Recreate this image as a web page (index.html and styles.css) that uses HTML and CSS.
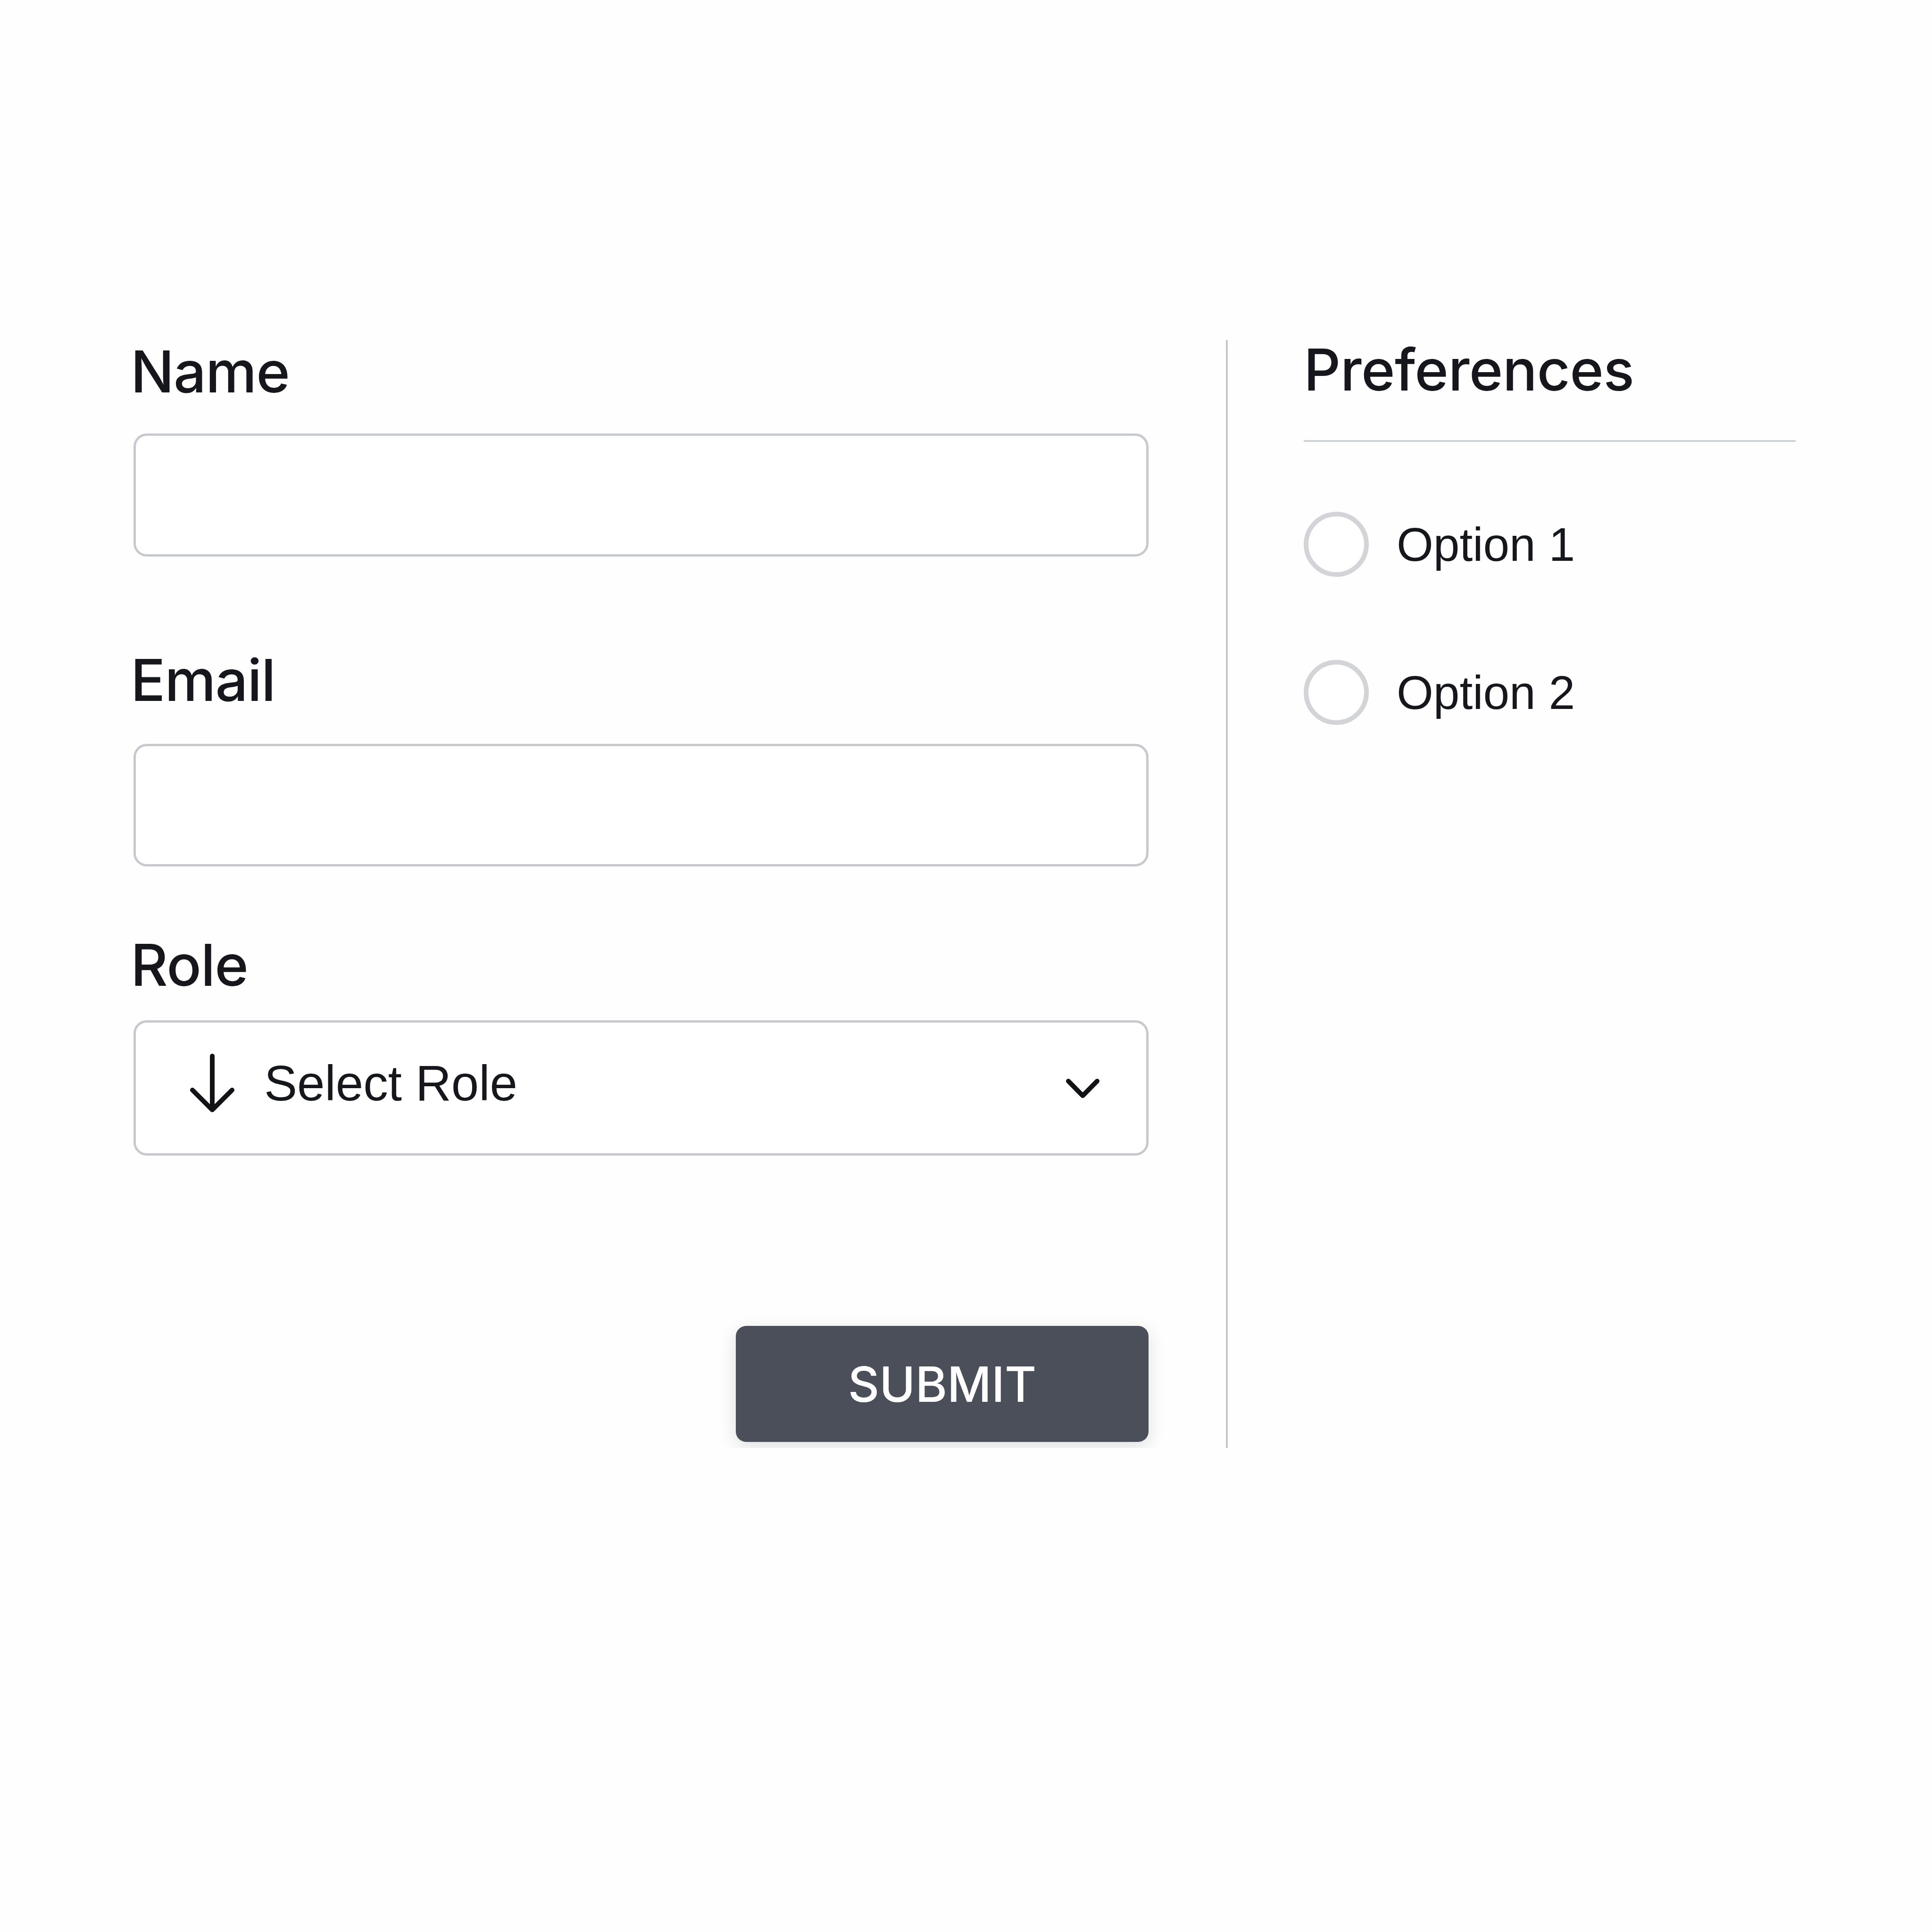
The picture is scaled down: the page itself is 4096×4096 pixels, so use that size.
FILE: index.html
```html
<!DOCTYPE html>
<html lang="en">
<head>
<meta charset="utf-8">
<title>Form</title>
<link rel="stylesheet" href="styles.css">
</head>
<body>
<div class="page">
  <form class="form">
    <div class="left">
      <label class="label">Name</label>
      <div class="input input-name"></div>
      <label class="label label-email">Email</label>
      <div class="input input-email"></div>
      <label class="label label-role">Role</label>
      <div class="select">
        <svg class="arrow" viewBox="0 0 100 126" aria-hidden="true">
          <path d="M50 5 V119 M8 77 L50 119 L92 77" fill="none" stroke="#121316" stroke-width="10" stroke-linecap="round" stroke-linejoin="round"/>
        </svg>
        <span class="select-text">Select Role</span>
        <svg class="chevron" viewBox="0 0 73 45" aria-hidden="true">
          <path d="M6 7 L36.5 38 L67 7" fill="none" stroke="#121316" stroke-width="10" stroke-linecap="round" stroke-linejoin="round"/>
        </svg>
      </div>
      <div class="actions">
        <button type="button" class="submit">SUBMIT</button>
      </div>
    </div>
    <div class="divider"></div>
    <div class="right">
      <h2 class="pref-title">Preferences</h2>
      <hr class="pref-rule">
      <div class="options">
        <label class="option"><span class="radio"></span><span class="option-text">Option 1</span></label>
        <label class="option"><span class="radio"></span><span class="option-text">Option 2</span></label>
      </div>
    </div>
  </form>
</div>
</body>
</html>
```

FILE: styles.css
```css
html, body {
  margin: 0;
  background: #fefefe;
}

.page {
  padding: 721px 0 0 283px;
}

.form {
  display: flex;
  align-items: stretch;
}

.left {
  width: 2152px;
  display: flex;
  flex-direction: column;
  padding-bottom: 13px;
  flex: none;
}

.label {
  display: block;
  margin-left: -6px;
  font-family: "Inter", "Liberation Sans", sans-serif;
  font-weight: 500;
  font-size: 122px;
  line-height: 134px;
  letter-spacing: -0.01em;
  color: #15171c;
}

.label-email {
  margin-top: 195px;
}

.label-role {
  margin-top: 142px;
}

.input {
  box-sizing: border-box;
  border: 5px solid #c6c9ce;
  border-radius: 28px;
  background: #ffffff;
}

.input-name {
  margin-top: 64px;
  height: 261px;
}

.input-email {
  margin-top: 68px;
  height: 260px;
}

.select {
  margin-top: 50px;
  height: 287px;
  box-sizing: border-box;
  border: 5px solid #c6c9ce;
  border-radius: 28px;
  background: #ffffff;
  display: flex;
  align-items: center;
  padding: 0 98px 20px 112px;
}

.arrow {
  width: 100px;
  height: 126px;
  flex: none;
}

.select-text {
  margin-left: 60px;
  font-family: "Liberation Sans", Arial, sans-serif;
  font-size: 105px;
  color: #15171c;
}

.chevron {
  margin-left: auto;
  margin-top: 22px;
  width: 73px;
  height: 45px;
  flex: none;
}

.actions {
  margin-top: 361px;
  display: flex;
  justify-content: flex-end;
}

.submit {
  width: 875px;
  height: 246px;
  padding: 0;
  border: 0;
  border-radius: 22px;
  background: #4a4f5a;
  color: #ffffff;
  font-family: "Inter", "Liberation Sans", sans-serif;
  font-weight: 500;
  font-size: 103px;
  letter-spacing: 0;
  box-shadow: 0 10px 36px rgba(30, 34, 45, 0.14);
}

.divider {
  width: 4px;
  flex: none;
  margin-left: 164px;
  background: #c4c8ce;
}

.right {
  margin-left: 161px;
  width: 1043px;
  flex: none;
}

.pref-title {
  margin: -4px 0 0;
  font-family: "Inter", "Liberation Sans", sans-serif;
  font-weight: 500;
  font-size: 122px;
  line-height: 134px;
  letter-spacing: -0.005em;
  color: #15171c;
}

.pref-rule {
  margin: 82px 0 0;
  border: 0;
  height: 4px;
  background: #cfd2d7;
}

.options {
  margin-top: 148px;
  display: flex;
  flex-direction: column;
  gap: 176px;
}

.option {
  display: flex;
  align-items: center;
}

.radio {
  width: 138px;
  height: 138px;
  box-sizing: border-box;
  border: 10px solid #d3d4d8;
  border-radius: 50%;
  background: #ffffff;
  flex: none;
}

.option-text {
  margin-left: 59px;
  font-family: "Liberation Sans", Arial, sans-serif;
  font-size: 100px;
  color: #15171c;
}
```
